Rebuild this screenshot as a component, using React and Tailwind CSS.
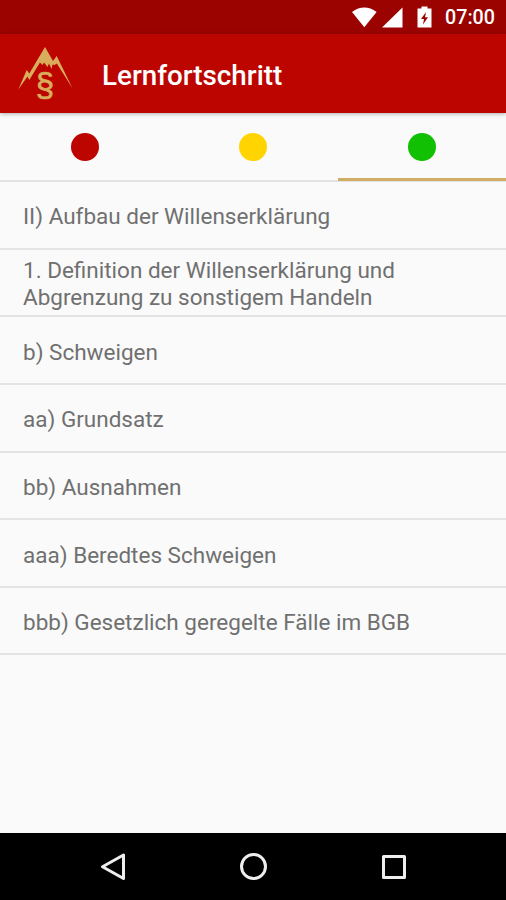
import React from 'react';

const tabs = [
  { id: 'red', color: 'bg-[#bd0500]' },
  { id: 'yellow', color: 'bg-[#ffd400]' },
  { id: 'green', color: 'bg-[#11bf03]' },
];

const topics = [
  'II) Aufbau der Willenserklärung',
  '1. Definition der Willenserklärung und Abgrenzung zu sonstigem Handeln',
  'b) Schweigen',
  'aa) Grundsatz',
  'bb) Ausnahmen',
  'aaa) Beredtes Schweigen',
  'bbb) Gesetzlich geregelte Fälle im BGB',
];

const StatusBar = () => (
  <div className="flex h-[34px] shrink-0 items-center justify-end bg-[#9a0300] pr-[11px] text-white">
    <svg width="25" height="21" viewBox="0 0 25 21" fill="currentColor">
      <path d="M0 5Q12.300 -3.800 24.600 5L12.300 20.300Z" />
    </svg>
    <svg className="ml-[5px]" width="21" height="21" viewBox="0 0 21 21" fill="currentColor">
      <path d="M20.500 0.500V20.500H0Z" />
    </svg>
    <svg className="ml-[14px]" width="15" height="22" viewBox="0 0 15 22">
      <path d="M4.500 0.500H10.500V2.500H14.500V21.500H0.500V2.500H4.500Z" fill="currentColor" />
      <path d="M9 6L4 13H7L6 18.500L11 11.200H8Z" fill="#9a0300" />
    </svg>
    <span className="ml-[13px] pt-0.5 text-[19.700px] font-medium leading-none">07:00</span>
  </div>
);

const Logo = () => (
  <svg width="56" height="58" viewBox="0 0 56 58" fill="#d9ad5c">
    <path d="M0.300 44.500L8.700 25L11.300 28.500L27 2L35 16L38.700 11L54.600 43.500L38.800 18.500L36.500 20L34.500 19.500L33.500 24L31 18.500L29.500 22L26 17.500L24.500 20L22 17.500L19.500 21.500L11.300 35L9.500 31.500Z" />
    <text x="27" y="50.500" textAnchor="middle" fontSize="33" fontFamily="Liberation Sans, sans-serif" stroke="#d9ad5c" strokeWidth="0.700">§</text>
  </svg>
);

const TabBar = () => (
  <div className="flex h-[69px] shrink-0 border-b-2 border-[#e2e2e2] pl-px">
    {tabs.map((tab) => (
      <div key={tab.id} className={`-mb-px flex flex-1 justify-center border-b-3 pt-5 ${tab.id === 'green' ? 'border-[#d0ae64]' : 'border-transparent'}`}>
        <div className={`size-7 rounded-full ${tab.color}`}></div>
      </div>
    ))}
  </div>
);

const NavBar = () => (
  <div className="flex h-[67px] shrink-0 items-center justify-center gap-[112px] bg-black pl-px text-[#eeeeee]">
    <svg width="28" height="28" viewBox="0 0 28 28" fill="none" stroke="currentColor" strokeWidth="3" strokeLinejoin="round">
      <path d="M23.500 2V25.500L2.500 13.700Z" />
    </svg>
    <svg width="28" height="28" viewBox="0 0 28 28" fill="none" stroke="currentColor" strokeWidth="3">
      <circle cx="13.500" cy="13.500" r="12" />
    </svg>
    <svg width="28" height="28" viewBox="0 0 28 28" fill="none" stroke="currentColor" strokeWidth="3" strokeLinejoin="round">
      <path d="M3.500 3.500H24.500V24.500H3.500Z" />
    </svg>
  </div>
);

const App = () => {
  return (
    <div className="flex h-screen flex-col bg-[#fafafa] font-[Roboto,sans-serif]">
      <StatusBar />
      <header className="relative flex h-[79px] shrink-0 items-center bg-[#bd0500] pl-[18px] shadow-[0_1px_4px_rgba(0,0,0,0.3)]">
        <Logo />
        <h1 className="ml-7 pt-1 text-[27.800px] font-medium leading-none text-white">Lernfortschritt</h1>
      </header>
      <TabBar />

      <ul className="flex-1">
        {topics.map((topic) => (
          <li key={topic} className="flex h-[67.650px] items-center border-b-2 border-[#e4e4e4] px-[23px] pt-1 text-[22.500px] leading-[27px] text-[#707070]">
            {topic}
          </li>
        ))}
      </ul>
      <NavBar />
    </div>
  );
};

export default App;
